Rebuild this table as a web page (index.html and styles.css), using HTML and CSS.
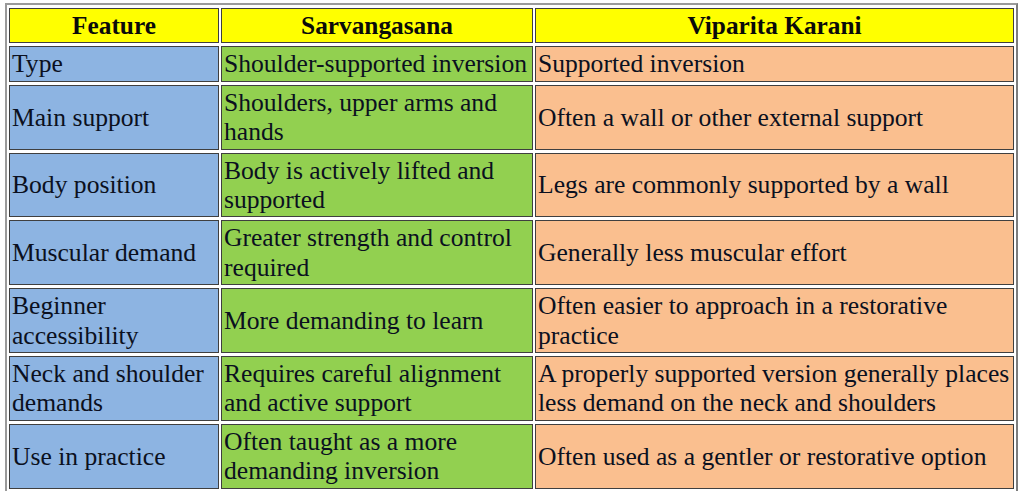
FILE: index.html
```html
<!DOCTYPE html>
<html>
<head>
<meta charset="utf-8">
<link rel="stylesheet" href="styles.css">
</head>
<body>
<table class="compare">
  <colgroup>
    <col class="c1">
    <col class="c2">
    <col class="c3">
  </colgroup>
  <thead>
    <tr>
      <th>Feature</th>
      <th>Sarvangasana</th>
      <th>Viparita Karani</th>
    </tr>
  </thead>
  <tbody>
    <tr>
      <td class="feat">Type</td>
      <td class="sarv">Shoulder-supported inversion</td>
      <td class="vip">Supported inversion</td>
    </tr>
    <tr>
      <td class="feat">Main support</td>
      <td class="sarv">Shoulders, upper arms and hands</td>
      <td class="vip">Often a wall or other external support</td>
    </tr>
    <tr>
      <td class="feat">Body position</td>
      <td class="sarv">Body is actively lifted and supported</td>
      <td class="vip">Legs are commonly supported by a wall</td>
    </tr>
    <tr>
      <td class="feat">Muscular demand</td>
      <td class="sarv">Greater strength and control required</td>
      <td class="vip">Generally less muscular effort</td>
    </tr>
    <tr>
      <td class="feat">Beginner accessibility</td>
      <td class="sarv">More demanding to learn</td>
      <td class="vip">Often easier to approach in a restorative practice</td>
    </tr>
    <tr>
      <td class="feat">Neck and shoulder demands</td>
      <td class="sarv">Requires careful alignment and active support</td>
      <td class="vip">A properly supported version generally places less demand on the neck and shoulders</td>
    </tr>
    <tr>
      <td class="feat">Use in practice</td>
      <td class="sarv">Often taught as a more demanding inversion</td>
      <td class="vip">Often used as a gentler or restorative option</td>
    </tr>
  </tbody>
</table>
</body>
</html>
```
FILE: styles.css
```css
html, body {
  margin: 0;
  padding: 0;
  background: #ffffff;
}

body {
  padding: 3px 0 0 5px;
  font-family: "Liberation Serif", "Times New Roman", serif;
  color: #0b1020;
}

.compare {
  width: 1013px;
  table-layout: fixed;
  border-collapse: separate;
  border-spacing: 2px 3px;
  border: 2px solid #7c7c7c;
  border-top-color: #9a9a9a;
  border-left-color: #9a9a9a;
  font-size: 25.6px;
  line-height: 29.4px;
}

.c1 { width: 210px; }
.c2 { width: 312px; }
.c3 { width: 479px; }

.compare th,
.compare td {
  border: 1px solid #3f3f3f;
  padding: 2px;
  vertical-align: middle;
  text-align: left;
  font-weight: normal;
}

.compare th {
  background: #ffff00;
  text-align: center;
  font-weight: bold;
  font-size: 25.3px;
  color: #0a0a0a;
}

.feat { background: #8db4e2; }
.sarv { background: #92d050; }
.vip  { background: #fabf8f; }
```
